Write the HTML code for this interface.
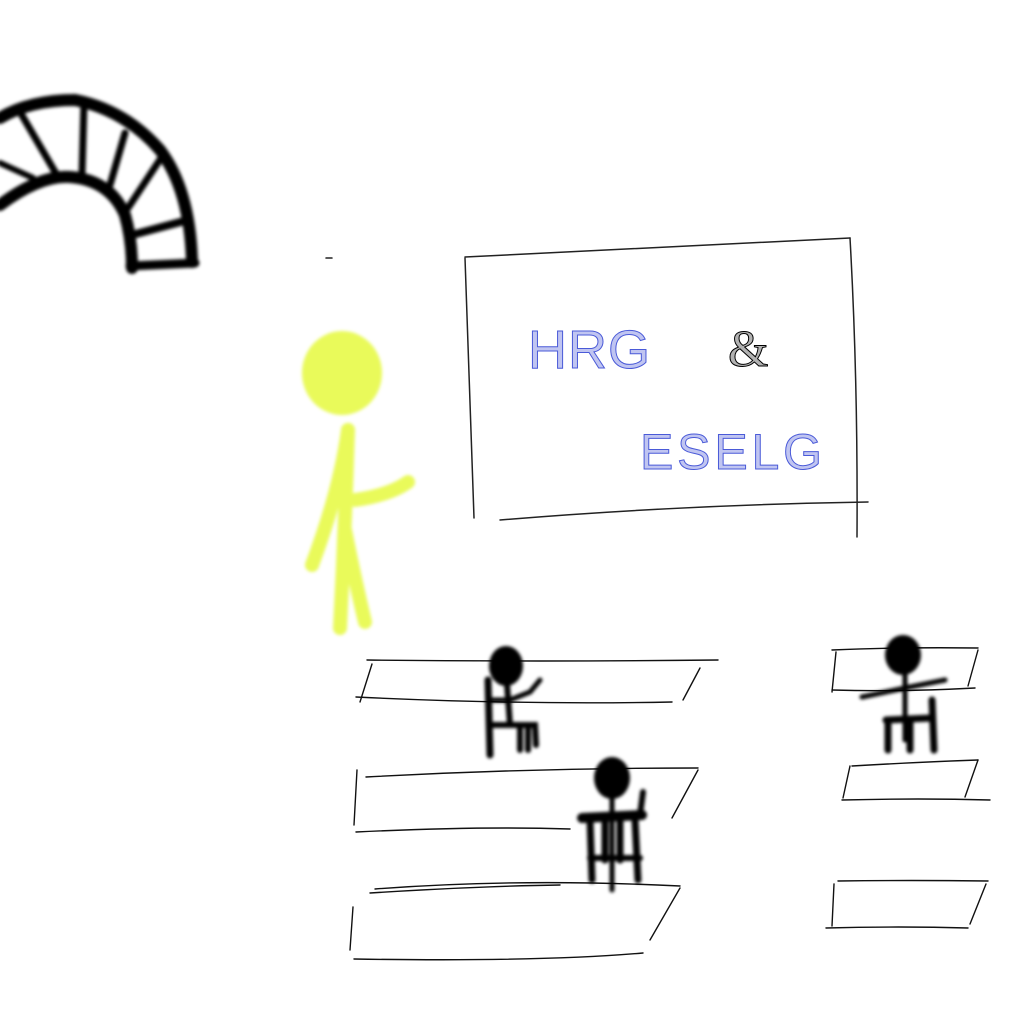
<!DOCTYPE html>
<html><head><style>html,body{margin:0;padding:0;background:#fff}svg{display:block}</style></head>
<body>
<svg width="1024" height="1024" viewBox="0 0 1024 1024" xmlns="http://www.w3.org/2000/svg">
<defs><filter id="b" x="-20%" y="-20%" width="140%" height="140%"><feGaussianBlur stdDeviation="1.5"/></filter></defs>
<rect width="1024" height="1024" fill="#fff"/>
<g stroke="#000" fill="none" stroke-linecap="round" filter="url(#b)">
<path d="M0 118 Q30 100 75 100 Q125 110 160 150 Q190 190 192 262" stroke-width="12"/>
<path d="M0 205 Q40 175 70 177 Q110 180 125 215 Q132 240 132 268" stroke-width="12"/>
<path d="M130 266 L195 263" stroke-width="9"/>
<path d="M132 235 L188 220" stroke-width="8"/>
<path d="M128 208 L163 155" stroke-width="7"/>
<path d="M110 185 L125 133" stroke-width="7"/>
<path d="M82 175 L84 102" stroke-width="7"/>
<path d="M58 177 L20 112" stroke-width="7"/>
<path d="M0 163 L33 178" stroke-width="6"/>
</g>
<g stroke="#222" fill="none" stroke-width="1.5" stroke-linecap="round">
<path d="M465 257 Q660 248 850 238"/>
<path d="M465 258 Q470 390 474 518"/>
<path d="M850 238 Q858 380 857 537"/>
<path d="M500 520 Q680 505 868 502"/>
<path d="M326 258 L332 258"/>
</g>
<text x="528" y="368" font-family="Liberation Sans, sans-serif" font-size="54" fill="#4a5ad8" fill-opacity="0.35" stroke="#4a5ad8" stroke-width="1" textLength="122">HRG</text>
<text x="728" y="366" font-family="Liberation Serif, serif" font-size="52" fill="#000" fill-opacity="0.3" stroke="#000" stroke-width="1">&amp;</text>
<text x="640" y="469" font-family="Liberation Sans, sans-serif" font-size="50" fill="#4a5ad8" fill-opacity="0.35" stroke="#4a5ad8" stroke-width="1" textLength="182">ESELG</text>
<g stroke="#e9fa5a" fill="none" stroke-linecap="round" stroke-width="14" filter="url(#b)">
<ellipse cx="342" cy="373" rx="40" ry="42" fill="#e9fa5a" stroke="none"/>
<path d="M348 430 Q340 490 312 565"/>
<path d="M348 430 Q345 530 340 628"/>
<path d="M345 530 Q355 580 365 622"/>
<path d="M355 500 Q390 495 408 482"/>
</g>
<g stroke="#111" fill="none" stroke-width="1.4" stroke-linecap="round">
<path d="M367 660 Q540 662 718 660"/><path d="M356 697 Q520 705 672 702"/>
<path d="M372 664 L360 702"/><path d="M700 668 L683 700"/>
<path d="M366 777 Q530 768 698 768"/><path d="M356 832 Q480 826 570 829"/>
<path d="M357 770 L354 825"/><path d="M698 770 L672 818"/>
<path d="M375 889 Q520 878 680 886"/><path d="M370 893 Q480 886 560 885"/>
<path d="M353 907 L350 950"/><path d="M680 888 L650 940"/>
<path d="M354 959 Q540 962 643 953"/>
<path d="M832 650 Q900 647 978 648"/><path d="M832 690 Q900 692 975 688"/>
<path d="M836 652 L832 692"/><path d="M978 650 L968 686"/>
<path d="M852 766 Q920 762 978 760"/><path d="M842 800 Q920 798 990 800"/>
<path d="M850 766 L843 798"/><path d="M978 760 L965 797"/>
<path d="M838 881 Q910 880 988 881"/><path d="M826 928 Q900 926 968 928"/>
<path d="M834 884 L832 926"/><path d="M986 884 L970 924"/>
</g>
<g stroke="#000" fill="none" stroke-linecap="round" filter="url(#b)">
<ellipse cx="506" cy="666" rx="17" ry="20" fill="#000" stroke="none"/>
<path d="M507 684 L510 725 L535 725 L536 745" stroke-width="6"/>
<path d="M488 680 L490 755" stroke-width="7"/>
<path d="M490 700 L510 700 L530 692 L540 680" stroke-width="5"/>
<path d="M490 725 L510 725 M520 728 L520 750 M528 728 L528 750" stroke-width="6"/>
<ellipse cx="612" cy="778" rx="18" ry="21" fill="#000" stroke="none"/>
<path d="M612 798 L612 890" stroke-width="5"/>
<path d="M582 818 L642 815" stroke-width="10"/>
<path d="M590 820 L592 880 M605 820 L605 860 M620 820 L620 860 M635 820 L638 880" stroke-width="7"/>
<path d="M590 858 L640 858" stroke-width="6"/>
<path d="M640 815 L643 792" stroke-width="6"/>
<ellipse cx="903" cy="655" rx="18" ry="20" fill="#000" stroke="none"/>
<path d="M905 674 L905 740" stroke-width="5"/>
<path d="M862 697 L905 688 L945 680" stroke-width="5"/>
<path d="M886 720 L932 718 M888 722 L888 750 M910 720 L910 750 M932 700 L934 750" stroke-width="7"/>
</g>
</svg>
</body></html>
